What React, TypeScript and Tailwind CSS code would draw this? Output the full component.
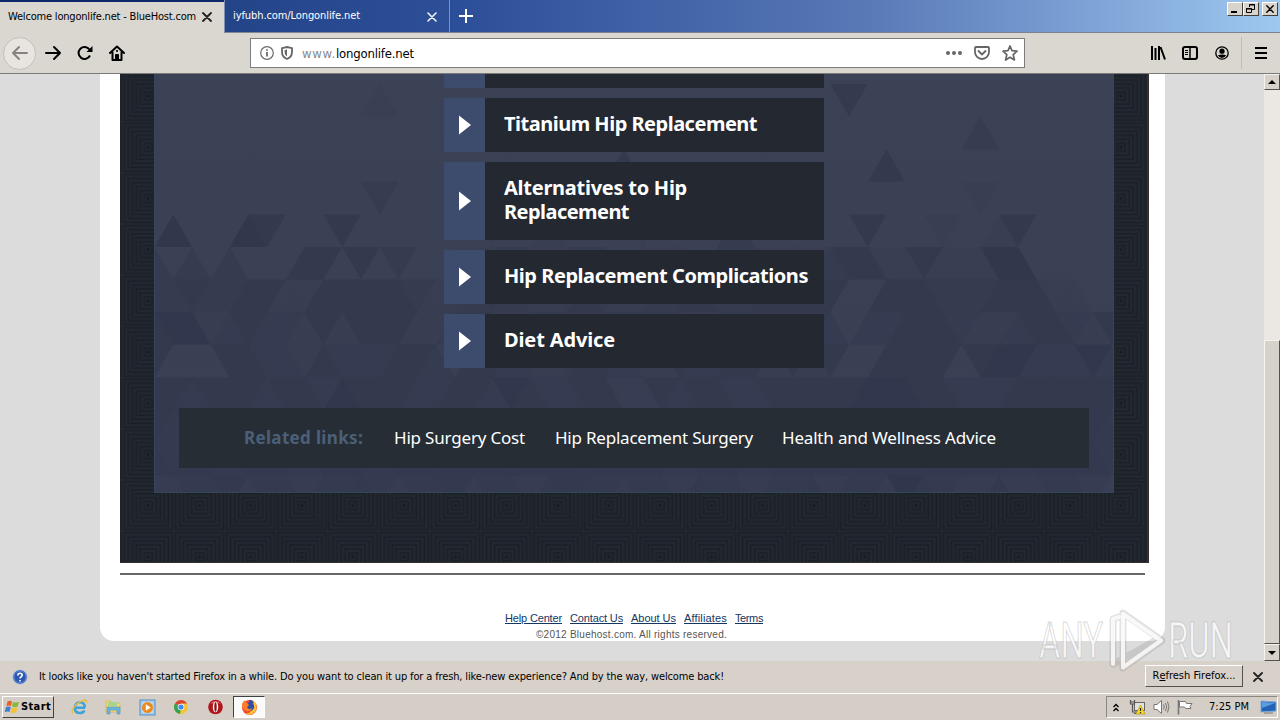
import { useLayoutEffect, useRef, useState } from "react";
import type { ReactNode } from "react";

// Text set to an exact width by spreading the difference over its letters.
function Fit({ w, className = "", children }: { w: number; className?: string; children: string }) {
  const ref = useRef<HTMLSpanElement>(null);
  const [spacing, setSpacing] = useState(0);
  useLayoutEffect(() => {
    if (!ref.current) return;
    const natural = ref.current.getBoundingClientRect().width;
    setSpacing((w - natural) / children.length);
  }, [w, children]);
  return (
    <span ref={ref} className={`inline-block shrink-0 whitespace-pre ${className}`} style={{ letterSpacing: spacing }}>
      {children}
    </span>
  );
}

const ui = "font-['DejaVu_Sans_Condensed','DejaVu_Sans',sans-serif] text-[11px]";
const humanist = "font-['Noto_Sans',sans-serif]";

// One digit per triangle, left to right; higher is darker.
const triangleRows: { flip: number; cells: string }[] = [
  { flip: 0, cells: "0000000000001000000000000000000000000300000000000000" },
  { flip: 0, cells: "0000000000000000000000000000000000000000000020000000" },
  { flip: 1, cells: "0000000000000000000000000300000000000003000000000000" },
  { flip: 1, cells: "0000000000002000000000000000000000000000000010000000" },
  { flip: 1, cells: "0400043000300000001001000010000200000030001001300000" },
  { flip: 0, cells: "2020200033030200010211022011201211112331131114400000" },
  { flip: 1, cells: "2232233113333321123211232112332233333003332223331100" },
  { flip: 0, cells: "3441232213133311232112331223211233332022333211233213" },
  { flip: 1, cells: "3000332213222332033221233211322331313003333034422242" },
  { flip: 0, cells: "3323332332433322332432233113233223333344433222333333" },
  { flip: 1, cells: "3233233323332332333233323333233323333233323333233332" },
  { flip: 0, cells: "3233233323332332333233323333233323333233323333233332" },
  { flip: 1, cells: "1122312212232122312212322122132212231221432113112210" },
];

const STEP = 18.77;
const ROW = 32.6;

function TriangleBackdrop() {
  return (
    <svg className="absolute inset-0" width="960" height="419" viewBox="0 0 960 419">
      <defs>
        <linearGradient id="panel" x1="0" y1="0" x2="0" y2="1">
          <stop offset="0" stopColor="#3b4256" />
          <stop offset="0.4" stopColor="#3b4154" />
          <stop offset="1" stopColor="#393f55" />
        </linearGradient>
      </defs>
      <rect width="960" height="419" fill="url(#panel)" />
      {triangleRows.map((row, r) =>
        row.cells.split("").map((cell, i) => {
          if (cell === "0") return null;
          const k = i - 1;
          const x = 19.3 + k * STEP;
          const top = 10 + r * ROW;
          const up = Math.abs(k + row.flip) % 2 === 1;
          const points = up
            ? `${x},${top} ${x - STEP},${top + ROW} ${x + STEP},${top + ROW}`
            : `${x},${top + ROW} ${x - STEP},${top} ${x + STEP},${top}`;
          return <polygon key={`${r}-${i}`} points={points} fill="#2c3248" opacity={Number(cell) * 0.15} />;
        })
      )}
      <path d="M.5 0V418.500H959.500V0" fill="none" stroke="#35465a" />
    </svg>
  );
}

function SquaresBackdrop() {
  return (
    <svg className="absolute inset-0" width="1029" height="489">
      <defs>
        <pattern id="squares" x="2.7" y="-3.5" width="51.2" height="51.2" patternUnits="userSpaceOnUse">
          <rect width="51.2" height="51.2" fill="#222730" />
          {[24, 20, 16, 12, 8, 4].map((s) => (
            <rect key={s} x={25.600 - s} y={25.600 - s} width={s * 2} height={s * 2} fill="none" stroke="#1a2028" strokeWidth="1.600" />
          ))}
          <rect x="24" y="24" width="3" height="3" fill="#171c24" />
        </pattern>
      </defs>
      <rect width="1029" height="489" fill="url(#squares)" />
    </svg>
  );
}

function WindowButton({ children, className = "" }: { children: ReactNode; className?: string }) {
  return (
    <div className={`flex h-[14px] w-[16px] items-center justify-center border border-t-white border-l-white border-r-[#404040] border-b-[#404040] bg-[#d8d4cc] ${className}`}>
      {children}
    </div>
  );
}

function Cross({ size, color, width = 1.8 }: { size: number; color: string; width?: number }) {
  return (
    <svg className="shrink-0" width={size} height={size} viewBox="0 0 10 10" stroke={color} strokeWidth={width} strokeLinecap="round">
      <path d="M1 1l8 8M9 1l-8 8" />
    </svg>
  );
}

function TitleBar() {
  return (
    <div className={`flex h-[33px] bg-[#12306f] ${ui}`}>
      <div className="flex h-full w-[224px] items-center border-t-2 border-[#0c2a6b] bg-[#dad6d0] pb-px pl-2 text-black">
        <Fit w={188}>Welcome longonlife.net - BlueHost.com</Fit>
        <span className="ml-[6px]">
          <Cross size={10} color="#222" />
        </span>
      </div>
      <div className="flex h-full w-[226px] items-center justify-between border-r border-b border-l border-[#8191b5] border-b-[#828794] bg-linear-to-r from-[#244488] to-[#2c4f98] pt-px pr-[12px] pl-2 text-white">
        <Fit w={127}>iyfubh.com/Longonlife.net</Fit>
        <Cross size={10} color="#f2f5fb" width={1.6} />
      </div>
      <div className="flex flex-1 items-start justify-between border-b border-[#7d828e] bg-linear-to-r from-[#2b4e98] via-[#5878b6] to-[#9fc8f0]">
        <svg className="mt-[9px] ml-[9px]" width="14" height="14" stroke="#fff" strokeWidth="2">
          <path d="M7 0v14M0 7h14" />
        </svg>
        <div className="mt-[2px] mr-[2px] flex">
          <WindowButton>
            <span className="mt-[6px] mr-[2px] h-[2px] w-[6px] bg-black" />
          </WindowButton>
          <WindowButton>
            <svg width="10" height="10" fill="none" stroke="#000">
              <path d="M3.500 3V.500h5v5H6M3 1h6M.500 4.500h5v4h-5zM0 5h6" />
            </svg>
          </WindowButton>
          <WindowButton className="ml-[3px]">
            <Cross size={8} color="#000" />
          </WindowButton>
        </div>
      </div>
    </div>
  );
}

function Toolbar() {
  return (
    <div className="flex h-[41px] items-center border-b border-[#7a7a7a] bg-[#dad6d0] pl-[3px]">
      <div className="flex size-[33px] shrink-0 items-center justify-center rounded-full border border-[#c2beb8] bg-[#e8e5e1]">
        <svg width="18" height="16" fill="none" stroke="#858380" strokeWidth="2" strokeLinecap="round" strokeLinejoin="round">
          <path d="M16 8H2M8 2L2 8l6 6" />
        </svg>
      </div>
      <svg className="ml-[8px]" width="18" height="16" fill="none" stroke="#000" strokeWidth="2" strokeLinecap="round" strokeLinejoin="round">
        <path d="M2 8h14M10 2l6 6-6 6" />
      </svg>
      <svg className="ml-[15px]" width="17" height="16" fill="none" stroke="#000" strokeWidth="2">
        <path d="M13 10.500A6 6 0 1 1 12.500 4.500" />
        <path d="M15.500 1v6h-6z" fill="#000" stroke="none" />
      </svg>
      <svg className="ml-[15px]" width="16" height="16" fill="none" stroke="#000" strokeWidth="2" strokeLinejoin="round" strokeLinecap="round">
        <path d="M1 8l7-6.500L15 8M3.500 7.500V15h9V7.500" />
        <path d="M7 14v-4h2v4M8 6h.1" />
      </svg>
      <div className="ml-[125px] flex h-[30px] w-[775px] items-center border border-[#7c7c7c] bg-white">
        <svg className="ml-[9px]" width="14" height="14" fill="none" stroke="#6b6b6b">
          <circle cx="7" cy="7" r="6.300" strokeWidth="1.200" />
          <path d="M7 6v4.500M7 3.200v1.600" strokeWidth="1.800" />
        </svg>
        <svg className="ml-[7px]" width="12" height="14" fill="none" stroke="#666" strokeWidth="1.800">
          <path d="M6 1L11 2.200V6c0 3.500-2 5.800-5 7C3 11.800 1 9.500 1 6V2.200z" />
          <path d="M6 3.500L3.500 4.200C3.500 7.500 4.200 9.200 6 10.500z" fill="#666" stroke="none" />
        </svg>
        <span className="mt-px ml-[9px] flex font-['DejaVu_Sans_Condensed','DejaVu_Sans',sans-serif] text-[13px]">
          <Fit w={34} className="text-[#8a8a8a]">www.</Fit>
          <Fit w={78} className="text-black">longonlife.net</Fit>
        </span>
        <div className="mr-[6px] ml-auto flex items-center">
          <svg width="16" height="4" fill="#666">
            <circle cx="2" cy="2" r="2" />
            <circle cx="8" cy="2" r="2" />
            <circle cx="14" cy="2" r="2" />
          </svg>
          <svg className="ml-[12px]" width="16" height="14" fill="none" stroke="#666" strokeWidth="1.800" strokeLinecap="round" strokeLinejoin="round">
            <path d="M2 1h12q1 0 1 1v4a7 7 0 0 1-14 0V2q0-1 1-1z" />
            <path d="M4.500 5L8 8.500 11.500 5" />
          </svg>
          <svg className="ml-[12px]" width="16" height="16" fill="none" stroke="#666" strokeWidth="1.700" strokeLinejoin="round">
            <path d="M8 1l2 4.700 5 .5-3.800 3.400L12.400 15 8 12.200 3.600 15l1.200-5.400L1 6.200l5-.5z" />
          </svg>
        </div>
      </div>
      <div className="ml-auto flex h-full items-center">
        <svg width="16" height="14" stroke="#000" strokeWidth="2">
          <path d="M2 0v14M5.500 2v12M9 0v14M10.500 1l4.500 12.500" />
        </svg>
        <svg className="ml-[16px]" width="16" height="14" fill="none" stroke="#000" strokeWidth="2">
          <rect x="1" y="1" width="14" height="12" rx="2" />
          <path d="M8 1v12" strokeWidth="1.500" />
          <path d="M3 4.500h3M3 6.500h3M3 8.500h3" strokeWidth="1" />
        </svg>
        <svg className="ml-[17px]" width="14" height="14">
          <circle cx="7" cy="7" r="6.200" fill="none" stroke="#000" strokeWidth="1.300" />
          <circle cx="7" cy="5.200" r="2.600" />
          <path d="M2.800 9.300Q7 7.500 11.200 9.300 9.500 12 7 12T2.800 9.300z" />
        </svg>
        <span className="mr-[13px] ml-[12px] h-[32px] w-px bg-[#bfbbb5]" />
        <svg className="mr-[13px]" width="12" height="12" stroke="#000" strokeWidth="2">
          <path d="M0 1h12M0 6h12M0 11h12" />
        </svg>
      </div>
    </div>
  );
}

function ResultCard({ lines, widths, tall = false }: { lines: string[]; widths: number[]; tall?: boolean }) {
  return (
    <div className={`flex w-[380px] ${tall ? "h-[78px]" : "h-[54px]"}`}>
      <div className="flex w-[41px] items-center justify-center bg-[#3d4b6c]">
        <svg width="12" height="20" fill="#fff">
          <path d="M0 .5L12 10 0 19.500z" />
        </svg>
      </div>
      <div className={`flex flex-1 flex-col items-start justify-center bg-[#232831] pb-[2px] pl-[19px] text-[20px] leading-[24px] font-bold text-white ${humanist}`}>
        {lines.map((line, i) => (
          <Fit key={line} w={widths[i]}>
            {line}
          </Fit>
        ))}
      </div>
    </div>
  );
}

function ParkedSite() {
  return (
    <div className="relative h-[489px] w-[1029px] overflow-hidden border-r-2 border-b border-[#35302f] bg-[#20262e]">
      <SquaresBackdrop />
      <div className="relative ml-[34px] h-[419px] w-[960px]">
        <TriangleBackdrop />
        <div className="relative flex h-full flex-col">
          <div className="ml-[290px] flex flex-col items-start gap-[10px]">
            <div className="flex h-[14px] w-[380px]">
              <div className="w-[41px] bg-[#3d4b6c]" />
              <div className="flex-1 bg-[#232831]" />
            </div>
            <ResultCard lines={["Titanium Hip Replacement"]} widths={[253]} />
            <ResultCard tall lines={["Alternatives to Hip", "Replacement"]} widths={[183, 125]} />
            <ResultCard lines={["Hip Replacement Complications"]} widths={[304]} />
            <ResultCard lines={["Diet Advice"]} widths={[111]} />
          </div>
          <div className={`mt-[40px] ml-[25px] flex h-[60px] w-[910px] items-center bg-[#262d35] pl-[65px] text-[17px] text-white ${humanist}`}>
            <Fit w={119} className="mr-[31px] font-bold text-[#4b6078]">Related links:</Fit>
            <Fit w={131} className="mr-[30px]">Hip Surgery Cost</Fit>
            <Fit w={198} className="mr-[29px]">Hip Replacement Surgery</Fit>
            <Fit w={214}>Health and Wellness Advice</Fit>
          </div>
        </div>
      </div>
    </div>
  );
}

const footerLinks = [
  { label: "Help Center", w: 57 },
  { label: "Contact Us", w: 53 },
  { label: "About Us", w: 45 },
  { label: "Affiliates", w: 43 },
  { label: "Terms", w: 28 },
];

function ScrollBar() {
  const bevel = "border border-t-[#f5f3f0] border-l-[#f5f3f0] border-r-[#55524e] border-b-[#55524e] bg-[#d6d2ca]";
  return (
    <div className="flex w-[16px] flex-col bg-[#ebe8e4]">
      <div className={`flex h-[16px] items-center justify-center ${bevel}`}>
        <svg width="8" height="4">
          <path d="M0 4L4 0l4 4z" />
        </svg>
      </div>
      <div className="h-[250px]" />
      <div className={`h-[304px] ${bevel}`} />
      <div className={`flex h-[17px] items-center justify-center ${bevel}`}>
        <svg width="8" height="4">
          <path d="M0 0l4 4 4-4z" />
        </svg>
      </div>
    </div>
  );
}

function PageArea() {
  return (
    <div className="flex h-[587px] bg-[#dcdcdc]">
      <div className="flex-1 pl-[100px]">
        <div className="h-[567px] w-[1065px] rounded-b-[14px] bg-white pl-[20px] font-['Liberation_Sans',Arial,sans-serif]">
          <ParkedSite />
          <div className="mt-[10px] h-[2px] w-[1025px] bg-[#6a6768]" />
          <div className="mt-[36px] ml-[385px] flex gap-[8px] text-[11px] leading-[15px] text-[#14375f] underline">
            {footerLinks.map((l) => (
              <Fit key={l.label} w={l.w}>
                {l.label}
              </Fit>
            ))}
          </div>
          <div className="mt-px ml-[416px] flex text-[10px] leading-[16px] text-[#555]">
            <Fit w={191}>©2012 Bluehost.com. All rights reserved.</Fit>
          </div>
        </div>
      </div>
      <ScrollBar />
    </div>
  );
}

function NoticeBar() {
  return (
    <div className={`flex h-[32px] items-center bg-[#d8d1ca] pl-[12px] text-black ${ui}`}>
      <svg width="16" height="16">
        <circle cx="8" cy="8" r="7.300" fill="#2c56b0" stroke="#c4cce0" />
        <circle cx="8" cy="8" r="6" fill="none" stroke="#6f94dc" strokeWidth="0.800" />
        <path d="M5.800 6.500Q5.800 4.200 8 4.200T10.200 6.200C10.200 7.500 8 7.800 8 9.500M8 11v1.500" fill="none" stroke="#fff" strokeWidth="1.600" />
      </svg>
      <Fit w={685} className="ml-[11px]">
        It looks like you haven't started Firefox in a while. Do you want to clean it up for a fresh, like-new experience? And by the way, welcome back!
      </Fit>
      <div className="mt-[-2px] mr-[10px] ml-auto flex h-[22px] w-[98px] items-center justify-center border border-t-white border-l-white border-r-[#55524e] border-b-[#55524e] bg-[#d8d1ca] whitespace-pre">
        R<span className="underline">e</span>fresh Firefox...
      </div>
      <div className="mr-[17px]">
        <Cross size={10} color="#222" />
      </div>
    </div>
  );
}

function ExplorerIcon() {
  return (
    <svg width="17" height="16" fill="none">
      <path d="M14 8.800H5M13.800 8.500C13.800 5 11.500 3.200 9 3.200S3.800 5.200 3.800 8.700 6 14 9 14c2.200 0 3.700-1 4.400-2.600" stroke="#3da3dc" strokeWidth="2.600" />
      <path d="M1.800 14.500C-.5 12 4 5.500 9 2.800S16 1 15.700 4" stroke="#e9bd3c" strokeWidth="1.400" />
    </svg>
  );
}

function FolderIcon() {
  return (
    <svg width="17" height="16">
      <path d="M1 2h5l1 2h8v9H1z" fill="#f1d878" stroke="#cdb052" strokeWidth="0.600" />
      <path d="M3 3h9v4H3z" fill="#a8d48d" />
      <path d="M2 8h13v7h-3v-4H5v4H2z" fill="#67b5df" stroke="#4b97c4" strokeWidth="0.600" />
    </svg>
  );
}

function MediaIcon() {
  return (
    <svg width="17" height="17">
      <rect x="1" y="1" width="15" height="15" fill="#a9cdec" stroke="#4e8fc8" />
      <rect x="3.500" y="3.500" width="10" height="10" fill="#fff" opacity="0.500" />
      <circle cx="8.500" cy="8.500" r="5.500" fill="#ee8a1c" />
      <path d="M6.800 5.300l5 3.200-5 3.200z" fill="#fff" />
    </svg>
  );
}

function ChromeIcon() {
  return (
    <svg width="14" height="14" viewBox="0 0 14 14">
      <circle cx="7" cy="7" r="7" fill="#f4c437" />
      <path d="M7 7L1 3.500A7 7 0 0 1 13 3.500H7z" fill="#dc4437" />
      <path d="M7 7l-1 7A7 7 0 0 1 1 3.500z" fill="#2fa256" />
      <circle cx="7" cy="7" r="3.300" fill="#fff" />
      <circle cx="7" cy="7" r="2.600" fill="#4286ee" />
    </svg>
  );
}

function OperaIcon() {
  return (
    <svg width="15" height="16">
      <circle cx="7.500" cy="8" r="7.300" fill="#b1151b" />
      <path d="M2 5Q7.500-1 13 5Q8 2 2 5z" fill="#e9787a" />
      <ellipse cx="7.500" cy="8" rx="2.700" ry="5.300" fill="#fff" />
      <ellipse cx="7.500" cy="8" rx="1.200" ry="4.700" fill="#8d1015" />
    </svg>
  );
}

function FirefoxIcon() {
  return (
    <svg width="17" height="17">
      <circle cx="8.500" cy="8.500" r="7.500" fill="#f2452f" />
      <path d="M12 1.500c4 2 4.500 8 2 11.200S7 16.500 4 14.500C10 15 11 11 10.500 8z" fill="#fdc432" />
      <circle cx="8.800" cy="7.600" r="4.400" fill="#304da8" />
      <path d="M1 6C1 4 2.500 2 4 1.200c0 1.300.5 2 2 2.600L8 6 6 8.200c1 2 3.600 2.300 5.200.8C10.500 12.500 5.500 13.500 3 10.500 1.500 9 1 7.500 1 6z" fill="#fb7d25" />
      <path d="M8 1.500Q11 0 13 4L9 5z" fill="#304da8" />
    </svg>
  );
}

const quickLaunch = [ExplorerIcon, FolderIcon, MediaIcon, ChromeIcon, OperaIcon];

function Taskbar() {
  return (
    <div className={`flex h-[27px] items-center border-t border-white bg-[#d5cec6] ${ui}`}>
      <div className="ml-[2px] flex h-[22px] w-[52px] items-center border border-t-white border-l-white border-r-[#404040] border-b-[#404040] pl-px font-bold text-black">
        <svg width="16" height="14">
          <path d="M3.500 1.500Q6 0 8 1.500L7 6.200Q5 5 2.300 6.200z" fill="#e5622c" />
          <path d="M9 2q3 1.200 6-.3L13.700 6.500Q11 8 8 6.500z" fill="#86b83a" />
          <path d="M2 7.200Q4.500 6 6.700 7.200L5.500 12Q3.500 10.800.7 12z" fill="#3c7ed2" />
          <path d="M7.700 7.600q3 1.200 5.800-.3L12.300 12Q9.500 13.800 6.500 12.200z" fill="#f3c132" />
        </svg>
        <Fit w={30} className="ml-px">Start</Fit>
      </div>
      <div className="ml-[8px] flex">
        {quickLaunch.map((Icon, i) => (
          <div key={i} className="flex w-[34px] items-center justify-center">
            <Icon />
          </div>
        ))}
      </div>
      <div className="ml-px flex h-[22px] w-[32px] items-center justify-center border border-t-[#404040] border-l-[#404040] border-r-white border-b-white bg-[#fbfafa]">
        <FirefoxIcon />
      </div>
      <div className="mr-[2px] ml-auto flex h-[22px] w-[172px] items-center border border-t-[#8b8782] border-l-[#8b8782] border-r-white border-b-white text-black">
        <svg className="ml-[6px]" width="6" height="9" fill="none" stroke="#000" strokeWidth="1.300">
          <path d="M.5 4L3 1.500 5.500 4M.5 8L3 5.500 5.500 8" />
        </svg>
        <svg className="ml-[10px]" width="17" height="16">
          <rect x="5.500" y="3.500" width="10" height="8" fill="#dfe2e0" stroke="#666" />
          <path d="M1.500 1v4h4V1M3.500 5v8h6M1.500 3h4M5 14.500h5" fill="none" stroke="#555" strokeWidth="1.200" />
          <path d="M11.500 6l4.500 9H7z" fill="#f8dc28" stroke="#b69a12" strokeWidth="0.700" />
          <path d="M11.500 9v3M11.500 13v1.200" stroke="#222" strokeWidth="1.200" />
        </svg>
        <svg className="ml-[7px]" width="17" height="16" fill="none" stroke="#777">
          <path d="M1 5.500h3L8.500 1.500v13L4 10.500H1z" fill="#fff" />
          <path d="M10.500 5.500q1.500 2.500 0 5M12.500 4q2.500 4 0 8M14.500 2.500q3 5.500 0 11" />
        </svg>
        <svg className="ml-[7px]" width="17" height="16">
          <path d="M1.500 1v14.500" stroke="#777" strokeWidth="1.600" />
          <path d="M2.500 2.500h6l1 2h5.500l-2 3 1 2H8.500l-1-1.500h-5z" fill="#fff" stroke="#777" />
        </svg>
        <Fit w={40} className="ml-[15px]">7:25 PM</Fit>
        <svg className="ml-auto" width="17" height="14">
          <path d="M1 1l15 1v9L1 12z" fill="#2362b5" stroke="#7da9d8" />
          <path d="M2 2l13 1L2 8z" fill="#5b9be0" />
          <path d="M4 13h9" stroke="#777" />
        </svg>
      </div>
    </div>
  );
}

function Watermark() {
  return (
    <svg className="absolute top-[600px] left-[1034px]" width="220" height="78">
      <g stroke="#9d9d9d" strokeOpacity="0.400" strokeWidth="1.200" fill="#fff" fillOpacity="0.750" className="font-['Roboto',sans-serif] text-[50px]">
        <text x="5" y="58" textLength="64" lengthAdjust="spacingAndGlyphs">ANY</text>
        <text x="134" y="58" textLength="65" lengthAdjust="spacingAndGlyphs">RUN</text>
      </g>
      <g fill="none" strokeLinejoin="round" strokeLinecap="round">
        <path d="M89 68V13l39 27.500-39 27M85 61l-6 3V19l6-2M94 56l28-16" stroke="#888" strokeOpacity="0.250" strokeWidth="7" />
        <path d="M89 67V14l38 26.500-38 27M79 64V19l6-2" stroke="#fff" strokeOpacity="0.800" strokeWidth="4" />
      </g>
    </svg>
  );
}

export default function App() {
  return (
    <div className="relative h-[720px] w-[1280px] overflow-hidden bg-[#dcdcdc]">
      <TitleBar />
      <Toolbar />
      <PageArea />
      <NoticeBar />
      <Taskbar />
      <Watermark />
    </div>
  );
}
